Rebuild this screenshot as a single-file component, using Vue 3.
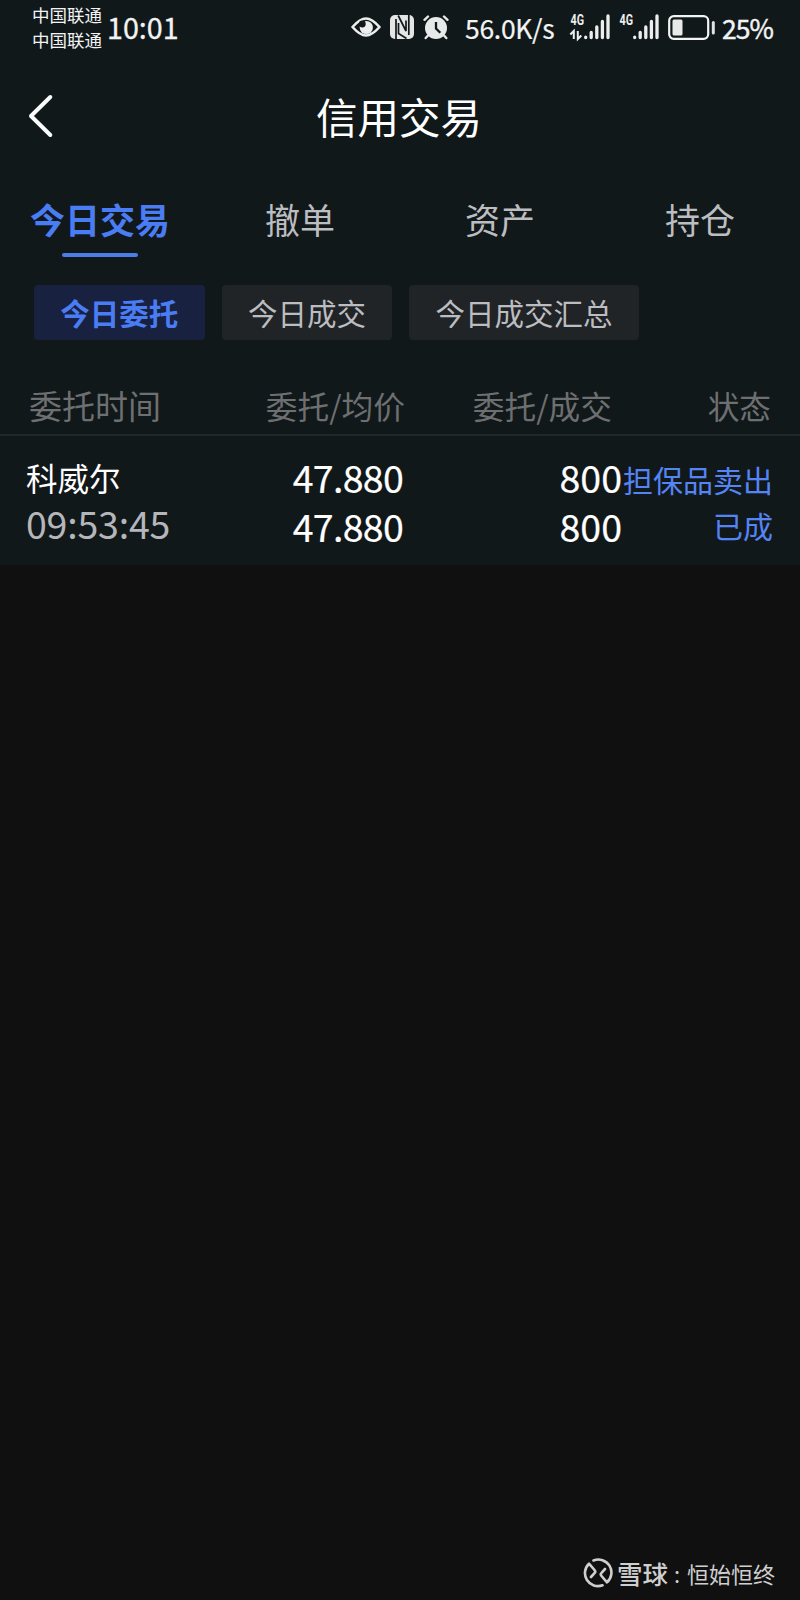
<template>
    <div class="page">
        <div class="panel">
            <div class="status-bar">
                <div class="carriers">
                    <span>中国联通</span>
                    <span>中国联通</span>
                </div>
                <span class="clock">10:01</span>
                <div class="status-right">
                    <svg class="eye" width="30" height="20" viewBox="0 0 30 20">
                        <path d="M1.500 10C7 3.800 11 1.500 15 1.500S23 3.800 28.500 10C23 16.200 19 18.500 15 18.500S7 16.200 1.500 10Z" fill="none" stroke="#eceeee" stroke-width="2.600" stroke-linejoin="round" />
                        <circle cx="15.300" cy="10.500" r="6.600" fill="#eceeee" />
                        <circle cx="11.300" cy="7" r="3.400" fill="#11181a" />
                    </svg>
                    <svg class="nfc" width="24" height="24" viewBox="0 0 24 24">
                        <rect width="24" height="24" rx="5" fill="#e4e6e6" />
                        <path d="M6 24V4M8.200 0.500L16 16V5.500M8.500 8V18.500L16.500 23.500M18.800 0V20" fill="none" stroke="#11181a" stroke-width="1.700" />
                    </svg>
                    <svg class="alarm" width="26" height="25" viewBox="0 0 26 25">
                        <circle cx="13" cy="13" r="11" fill="#e8eaea" />
                        <path d="M1.500 4.800L5 1.500M24.500 4.800L21 1.500M5 20.500L2.700 23M21 20.500L23.300 23" stroke="#e8eaea" stroke-width="2.400" stroke-linecap="round" />
                        <path d="M13 7V13.500L17.300 17.800" fill="none" stroke="#11181a" stroke-width="2.300" />
                    </svg>
                    <span class="speed">56.0K/s</span>
                    <svg v-for="n in 2" :key="n" class="signal" width="41" height="26" viewBox="0 0 41 26">
                        <text x="0.500" y="11" textLength="13.500" lengthAdjust="spacingAndGlyphs">4G</text>
                        <path v-if="n === 1" d="M0.300 20.500L3.800 17V25M7.800 17V25L11.300 21.500" fill="none" stroke="#eceeee" stroke-width="2" />
                        <path d="M15.700 23.200V23.600M21.200 18.500V23.600M26.800 13V23.600M32.400 7.500V23.600M38 2V23.600" stroke="#eceeee" stroke-width="3.300" stroke-linecap="round" />
                    </svg>
                    <svg class="battery" width="48" height="25" viewBox="0 0 48 25">
                        <rect x="1.200" y="1.200" width="39" height="22.600" rx="4.500" fill="none" stroke="#f2f4f4" stroke-width="2.200" />
                        <rect x="4.500" y="4.500" width="10" height="16" rx="1.500" fill="#e8eaea" />
                        <path d="M45.300 7.500V18" stroke="#e0e3e3" stroke-width="3" stroke-linecap="round" />
                    </svg>
                    <span class="percent">25%</span>
                </div>
            </div>

            <div class="nav-bar">
                <svg class="back" width="26" height="44" viewBox="0 0 26 44">
                    <path d="M22.300 3L3 22L22.300 41" fill="none" stroke="#fafbfb" stroke-width="4" stroke-linecap="round" stroke-linejoin="round" />
                </svg>
                <h1>信用交易</h1>
            </div>

            <div class="tabs">
                <div v-for="tab in tabs" :key="tab" class="tab" :class="{ active: tab === activeTab }" @click="activeTab = tab">
                    {{ tab }}
                </div>
            </div>

            <div class="filters">
                <button v-for="item in filters" :key="item" :class="{ active: item === activeFilter }" @click="activeFilter = item">
                    {{ item }}
                </button>
            </div>

            <div class="grid table-head">
                <span class="first">委托时间</span>
                <span>委托/均价</span>
                <span>委托/成交</span>
                <span>状态</span>
            </div>

            <div v-for="order in orders" :key="order.time" class="grid order">
                <div class="cell stock">
                    <span class="name">{{ order.name }}</span>
                    <span class="time">{{ order.time }}</span>
                </div>
                <div class="cell number price">
                    <span>{{ order.price }}</span>
                    <span>{{ order.avgPrice }}</span>
                </div>
                <div class="cell number">
                    <span>{{ order.amount }}</span>
                    <span>{{ order.filled }}</span>
                </div>
                <div class="cell state">
                    <span>{{ order.type }}</span>
                    <span>{{ order.state }}</span>
                </div>
            </div>
        </div>

        <div class="watermark">
            <svg width="30" height="30" viewBox="0 0 30 30" fill="none" stroke="#cfcfcf" stroke-width="2.600" stroke-linecap="round" stroke-linejoin="round">
                <path d="M10.500 2.500A13 13 0 0 1 24 24.300L18.500 18Q17 16.300 18.500 14.800L22 11" />
                <path d="M19.500 27.300A13 13 0 0 1 6 5.700L11.500 12Q13 13.700 11.500 15.200L8 19" />
            </svg>
            <span class="brand">雪球</span>
            <span class="colon">:</span>
            <span class="user">恒始恒终</span>
        </div>
    </div>
</template>

<script setup>
import { ref } from 'vue';

const tabs = ['今日交易', '撤单', '资产', '持仓'];
const activeTab = ref('今日交易');

const filters = ['今日委托', '今日成交', '今日成交汇总'];
const activeFilter = ref('今日委托');

const orders = ref([
    {
        name: '科威尔',
        time: '09:53:45',
        price: '47.880',
        avgPrice: '47.880',
        amount: '800',
        filled: '800',
        type: '担保品卖出',
        state: '已成'
    }
]);
</script>

<style>
body {
    margin: 0;
    background: #101010;
}
</style>

<style scoped>
.page {
    display: flex;
    flex-direction: column;
    justify-content: space-between;
    width: 800px;
    height: 1600px;
    background: #101010;
    color: #fff;
    font-family: "Noto Sans CJK SC", sans-serif;
    white-space: nowrap;
    overflow: hidden;
}

.panel {
    box-sizing: border-box;
    height: 565px;
    background: #11181a;
}

/* status bar */
.status-bar {
    display: flex;
    height: 56px;
    padding-left: 32px;
    color: #f2f4f4;
}

.carriers {
    display: flex;
    flex-direction: column;
    width: 75px;
    padding-top: 3px;
    font-size: 17.5px;
    line-height: 24.5px;
}

.clock {
    font-size: 28.7px;
    line-height: 54px;
    -webkit-text-stroke: 0.3px currentColor;
}

.status-right {
    display: flex;
    align-items: center;
    height: 54px;
    margin-left: auto;
    padding-right: 26px;
}

.nfc {
    margin-left: 9px;
}

.alarm {
    margin-left: 9px;
}

.speed {
    width: 90px;
    margin: 1px 0 0 16px;
    font-size: 26.5px;
    line-height: 50px;
    letter-spacing: -0.3px;
    -webkit-text-stroke: 0.2px currentColor;
}

.signal {
    margin-left: 15px;
    margin-right: -7px;
    overflow: visible;
}

.signal text {
    fill: #eceeee;
    font-family: Roboto, sans-serif;
    font-size: 15px;
    font-weight: 700;
}

.battery {
    margin-left: 15px;
}

.percent {
    width: 52px;
    margin: 1px 0 0 6px;
    font-size: 26.5px;
    line-height: 50px;
    letter-spacing: -1px;
    -webkit-text-stroke: 0.4px currentColor;
}

/* title */
.nav-bar {
    display: grid;
    grid-template-columns: 100px 1fr 102px;
    align-items: center;
    height: 120px;
}

.back {
    margin-left: 28px;
}

h1 {
    margin: 0;
    font-size: 41.5px;
    font-weight: 400;
    line-height: 60px;
    text-align: center;
}

/* tabs */
.tabs {
    display: grid;
    grid-template-columns: repeat(4, 1fr);
    height: 84px;
}

.tab {
    display: flex;
    flex-direction: column;
    align-items: center;
    padding-top: 12px;
    font-size: 35px;
    line-height: 61px;
    color: #bcbdc0;
}

.tab.active {
    color: #4a7df3;
    font-weight: 700;
}

.tab.active::after {
    content: '';
    width: 76px;
    height: 4.5px;
    margin-top: 3.5px;
    border-radius: 2px;
    background: #4a7de8;
}

/* filters */
.filters {
    display: flex;
    gap: 17px;
    margin-top: 25px;
    padding-left: 34px;
}

button {
    height: 55px;
    padding: 0 26.3px;
    border: none;
    border-radius: 4px;
    background: #212427;
    color: #bcbdc0;
    font-family: inherit;
    font-size: 29.5px;
    line-height: 55px;
}

button.active {
    background: #182140;
    color: #4a7df3;
    font-weight: 700;
}

/* orders */
.grid {
    display: grid;
    grid-template-columns: 232px 173px 207px 159px;
}

.table-head {
    box-sizing: border-box;
    height: 96px;
    padding-top: 35px;
    border-bottom: 2px solid #20282a;
    color: #6d6f70;
    font-size: 31.7px;
    line-height: 60px;
    text-align: right;
}

.table-head .first {
    padding-left: 29px;
    font-size: 33px;
    text-align: left;
}

.order {
    grid-template-columns: 232px 171px 219px 151px;
    height: 129px;
}

.cell {
    display: flex;
    flex-direction: column;
    align-items: flex-end;
    padding-top: 16px;
    line-height: 49px;
}

.stock {
    align-items: flex-start;
    padding: 18px 0 0 26px;
    line-height: 46px;
}

.name {
    font-size: 31.5px;
}

.time {
    color: #b5b6ba;
    font-size: 37.5px;
    letter-spacing: -0.2px;
}

.number {
    font-size: 37.5px;
    -webkit-text-stroke: 0.2px currentColor;
}

.price {
    letter-spacing: -0.7px;
}

.state {
    padding-top: 20px;
    line-height: 46px;
    color: #5584f5;
    font-size: 30px;
}

/* watermark */
.watermark {
    display: flex;
    align-items: center;
    justify-content: flex-end;
    height: 54px;
    padding-right: 25px;
    color: #cfcfcf;
    line-height: 50px;
}

.watermark span {
    margin-top: -1px;
}

.brand {
    margin-left: 4px;
    font-size: 25.5px;
    font-weight: 500;
}

.colon {
    width: 19px;
    font-size: 22px;
    text-indent: 6px;
}

.user {
    font-size: 22px;
}
</style>
